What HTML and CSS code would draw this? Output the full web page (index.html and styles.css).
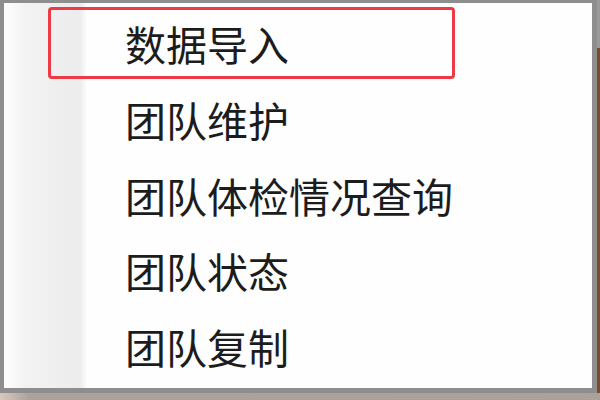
FILE: index.html
```html
<!DOCTYPE html>
<html lang="zh">
<head>
<meta charset="utf-8">
<title>菜单</title>
<link rel="stylesheet" href="styles.css">
</head>
<body>
<div class="screen">
  <div class="top">
    <div class="menu">
      <div class="item marked">数据导入</div>
      <div class="item">团队维护</div>
      <div class="item">团队体检情况查询</div>
      <div class="item">团队状态</div>
      <div class="item">团队复制</div>
    </div>
    <div class="edge"></div>
  </div>
  <div class="floor"></div>
</div>
</body>
</html>
```
FILE: styles.css
```css
html, body {
  margin: 0;
  padding: 0;
}
body {
  width: 600px;
  height: 400px;
  overflow: hidden;
  background: #a9a19a;
  font-family: "Noto Sans CJK SC", "Noto Sans", sans-serif;
}
.screen {
  display: flex;
  flex-direction: column;
  width: 600px;
  height: 400px;
}
.top {
  display: flex;
  height: 393px;
}
.menu {
  box-sizing: border-box;
  width: 597px;
  height: 393px;
  border-style: solid;
  border-color: #8e8e8e;
  border-width: 3px 5px 5px 4px;
  padding: 4px 0 0 44px;
  display: flex;
  flex-direction: column;
  gap: 3.75px;
  background:
    linear-gradient(to right, #fdfdfd 0, #fafafa 8px, #f3f3f3 20px, #ececec 76px, #fefefe 83px, #fefefe 100%);
}
.edge {
  flex: 1;
  background: linear-gradient(to bottom, #9a9a9a 0, #9a9a9a 48px, #7b4a30 48px, #7b4a30 100%);
}
.floor {
  flex: 1;
  background: linear-gradient(to right, #d8c8bc 0, #aaa29b 30px, #a9a19a 100%);
}
.item {
  box-sizing: border-box;
  width: 407px;
  height: 72px;
  border: 3px solid transparent;
  border-radius: 4px;
  padding-left: 74px;
  line-height: 66px;
  font-size: 41px;
  font-weight: 400;
  color: #1c1c1c;
  white-space: nowrap;
}
.item.marked {
  border-color: #ee3a44;
}
```
